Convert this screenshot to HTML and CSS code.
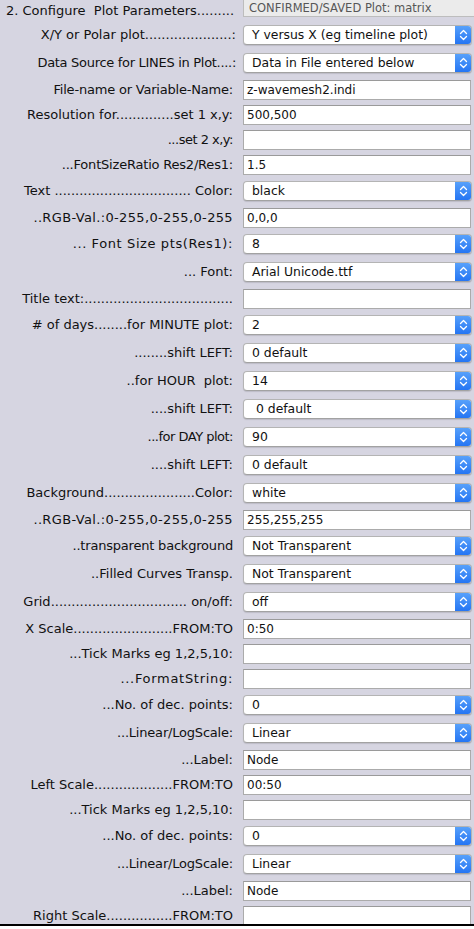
FILE: index.html
```html
<!DOCTYPE html>
<html>
<head>
<meta charset="utf-8">
<link rel="stylesheet" href="styles.css">
</head>
<body>
<div class="panel">
  <div class="row h">
    <div class="lbl head">2. Configure&nbsp; Plot Parameters.........</div>
    <div class="ctl"><div class="status">CONFIRMED/SAVED Plot: matrix</div></div>
  </div>

  <div class="row s"><div class="lbl flush">X/Y or Polar plot.....................:</div><div class="ctl"><div class="select"><span class="val">Y versus X (eg timeline plot)</span><span class="step"><svg width="17" height="20" viewBox="0 0 17 20"><polyline points="5.5,8.5 8.5,5.5 11.5,8.5"/><polyline points="5.5,11.5 8.5,14.5 11.5,11.5"/></svg></span></div></div></div>
  <div class="row s"><div class="lbl flush tight">Data Source for LINES in Plot....:</div><div class="ctl"><div class="select"><span class="val">Data in File entered below</span><span class="step"><svg width="17" height="20" viewBox="0 0 17 20"><polyline points="5.5,8.5 8.5,5.5 11.5,8.5"/><polyline points="5.5,11.5 8.5,14.5 11.5,11.5"/></svg></span></div></div></div>
  <div class="row i"><div class="lbl snug">File-name or Variable-Name:</div><div class="ctl"><div class="input">z-wavemesh2.indi</div></div></div>
  <div class="row i"><div class="lbl">Resolution for..............set 1 x,y:</div><div class="ctl"><div class="input">500,500</div></div></div>
  <div class="row i"><div class="lbl tighter">...set 2 x,y:</div><div class="ctl"><div class="input"></div></div></div>
  <div class="row i"><div class="lbl snug">...FontSizeRatio Res2/Res1:</div><div class="ctl"><div class="input">1.5</div></div></div>
  <div class="row s"><div class="lbl">Text ................................. Color:</div><div class="ctl"><div class="select"><span class="val">black</span><span class="step"><svg width="17" height="20" viewBox="0 0 17 20"><polyline points="5.5,8.5 8.5,5.5 11.5,8.5"/><polyline points="5.5,11.5 8.5,14.5 11.5,11.5"/></svg></span></div></div></div>
  <div class="row i"><div class="lbl wide">..RGB-Val.:0-255,0-255,0-255</div><div class="ctl"><div class="input">0,0,0</div></div></div>
  <div class="row s"><div class="lbl wider">... Font Size pts(Res1):</div><div class="ctl"><div class="select"><span class="val">8</span><span class="step"><svg width="17" height="20" viewBox="0 0 17 20"><polyline points="5.5,8.5 8.5,5.5 11.5,8.5"/><polyline points="5.5,11.5 8.5,14.5 11.5,11.5"/></svg></span></div></div></div>
  <div class="row s"><div class="lbl">... Font:</div><div class="ctl"><div class="select"><span class="val">Arial Unicode.ttf</span><span class="step"><svg width="17" height="20" viewBox="0 0 17 20"><polyline points="5.5,8.5 8.5,5.5 11.5,8.5"/><polyline points="5.5,11.5 8.5,14.5 11.5,11.5"/></svg></span></div></div></div>
  <div class="row i"><div class="lbl">Title text:....................................</div><div class="ctl"><div class="input"></div></div></div>
  <div class="row s"><div class="lbl"># of days........for MINUTE plot:</div><div class="ctl"><div class="select"><span class="val">2</span><span class="step"><svg width="17" height="20" viewBox="0 0 17 20"><polyline points="5.5,8.5 8.5,5.5 11.5,8.5"/><polyline points="5.5,11.5 8.5,14.5 11.5,11.5"/></svg></span></div></div></div>
  <div class="row s"><div class="lbl">........shift LEFT:</div><div class="ctl"><div class="select"><span class="val">0 default</span><span class="step"><svg width="17" height="20" viewBox="0 0 17 20"><polyline points="5.5,8.5 8.5,5.5 11.5,8.5"/><polyline points="5.5,11.5 8.5,14.5 11.5,11.5"/></svg></span></div></div></div>
  <div class="row s"><div class="lbl">..for HOUR&nbsp; plot:</div><div class="ctl"><div class="select"><span class="val">14</span><span class="step"><svg width="17" height="20" viewBox="0 0 17 20"><polyline points="5.5,8.5 8.5,5.5 11.5,8.5"/><polyline points="5.5,11.5 8.5,14.5 11.5,11.5"/></svg></span></div></div></div>
  <div class="row s"><div class="lbl">....shift LEFT:</div><div class="ctl"><div class="select"><span class="val">&nbsp;0 default</span><span class="step"><svg width="17" height="20" viewBox="0 0 17 20"><polyline points="5.5,8.5 8.5,5.5 11.5,8.5"/><polyline points="5.5,11.5 8.5,14.5 11.5,11.5"/></svg></span></div></div></div>
  <div class="row s"><div class="lbl tighter">...for DAY plot:</div><div class="ctl"><div class="select"><span class="val">90</span><span class="step"><svg width="17" height="20" viewBox="0 0 17 20"><polyline points="5.5,8.5 8.5,5.5 11.5,8.5"/><polyline points="5.5,11.5 8.5,14.5 11.5,11.5"/></svg></span></div></div></div>
  <div class="row s"><div class="lbl">....shift LEFT:</div><div class="ctl"><div class="select"><span class="val">0 default</span><span class="step"><svg width="17" height="20" viewBox="0 0 17 20"><polyline points="5.5,8.5 8.5,5.5 11.5,8.5"/><polyline points="5.5,11.5 8.5,14.5 11.5,11.5"/></svg></span></div></div></div>
  <div class="row s"><div class="lbl">Background......................Color:</div><div class="ctl"><div class="select"><span class="val">white</span><span class="step"><svg width="17" height="20" viewBox="0 0 17 20"><polyline points="5.5,8.5 8.5,5.5 11.5,8.5"/><polyline points="5.5,11.5 8.5,14.5 11.5,11.5"/></svg></span></div></div></div>
  <div class="row i"><div class="lbl wide">..RGB-Val.:0-255,0-255,0-255</div><div class="ctl"><div class="input">255,255,255</div></div></div>
  <div class="row s"><div class="lbl snug">..transparent background</div><div class="ctl"><div class="select"><span class="val">Not Transparent</span><span class="step"><svg width="17" height="20" viewBox="0 0 17 20"><polyline points="5.5,8.5 8.5,5.5 11.5,8.5"/><polyline points="5.5,11.5 8.5,14.5 11.5,11.5"/></svg></span></div></div></div>
  <div class="row s"><div class="lbl">..Filled Curves Transp.</div><div class="ctl"><div class="select"><span class="val">Not Transparent</span><span class="step"><svg width="17" height="20" viewBox="0 0 17 20"><polyline points="5.5,8.5 8.5,5.5 11.5,8.5"/><polyline points="5.5,11.5 8.5,14.5 11.5,11.5"/></svg></span></div></div></div>
  <div class="row s"><div class="lbl">Grid................................. on/off:</div><div class="ctl"><div class="select"><span class="val">off</span><span class="step"><svg width="17" height="20" viewBox="0 0 17 20"><polyline points="5.5,8.5 8.5,5.5 11.5,8.5"/><polyline points="5.5,11.5 8.5,14.5 11.5,11.5"/></svg></span></div></div></div>
  <div class="row i"><div class="lbl">X Scale........................FROM:TO</div><div class="ctl"><div class="input">0:50</div></div></div>
  <div class="row i"><div class="lbl">...Tick Marks eg 1,2,5,10:</div><div class="ctl"><div class="input"></div></div></div>
  <div class="row i"><div class="lbl loose">...FormatString:</div><div class="ctl"><div class="input"></div></div></div>
  <div class="row s"><div class="lbl">...No. of dec. points:</div><div class="ctl"><div class="select"><span class="val">0</span><span class="step"><svg width="17" height="20" viewBox="0 0 17 20"><polyline points="5.5,8.5 8.5,5.5 11.5,8.5"/><polyline points="5.5,11.5 8.5,14.5 11.5,11.5"/></svg></span></div></div></div>
  <div class="row s"><div class="lbl snug">...Linear/LogScale:</div><div class="ctl"><div class="select"><span class="val">Linear</span><span class="step"><svg width="17" height="20" viewBox="0 0 17 20"><polyline points="5.5,8.5 8.5,5.5 11.5,8.5"/><polyline points="5.5,11.5 8.5,14.5 11.5,11.5"/></svg></span></div></div></div>
  <div class="row i"><div class="lbl">...Label:</div><div class="ctl"><div class="input">Node</div></div></div>
  <div class="row i"><div class="lbl">Left Scale...................FROM:TO</div><div class="ctl"><div class="input">00:50</div></div></div>
  <div class="row i"><div class="lbl">...Tick Marks eg 1,2,5,10:</div><div class="ctl"><div class="input"></div></div></div>
  <div class="row s"><div class="lbl">...No. of dec. points:</div><div class="ctl"><div class="select"><span class="val">0</span><span class="step"><svg width="17" height="20" viewBox="0 0 17 20"><polyline points="5.5,8.5 8.5,5.5 11.5,8.5"/><polyline points="5.5,11.5 8.5,14.5 11.5,11.5"/></svg></span></div></div></div>
  <div class="row s"><div class="lbl snug">...Linear/LogScale:</div><div class="ctl"><div class="select"><span class="val">Linear</span><span class="step"><svg width="17" height="20" viewBox="0 0 17 20"><polyline points="5.5,8.5 8.5,5.5 11.5,8.5"/><polyline points="5.5,11.5 8.5,14.5 11.5,11.5"/></svg></span></div></div></div>
  <div class="row i"><div class="lbl">...Label:</div><div class="ctl"><div class="input">Node</div></div></div>
  <div class="row i"><div class="lbl">Right Scale................FROM:TO</div><div class="ctl"><div class="input"></div></div></div>
</div>
<div class="footer"></div>
</body>
</html>
```

FILE: styles.css
```css
html, body {
  margin: 0;
  padding: 0;
  background: #ffffff;
}

body {
  font-family: "DejaVu Sans", "Liberation Sans", sans-serif;
  font-size: 12.4px;
  color: #111;
}

.panel {
  background: #d6d5e1;
  height: 924px;
  overflow: hidden;
}

.footer {
  border-top: 2px solid #000;
  height: 6px;
  background: #ffffff;
}

.row {
  display: grid;
  grid-template-columns: 236px 228px;
  column-gap: 7px;
  align-items: start;
}

.row.h { height: 21px; }
.row.s { height: 28px; }
.row.i { height: 25px; }

.row.s .ctl { padding-top: 4px; }
.row.i .ctl { padding-top: 3px; }

.lbl {
  font-size: 13px;
  text-align: right;
  white-space: nowrap;
  overflow: hidden;
  padding-right: 3px;
}

.lbl.flush { padding-right: 0; }
.lbl.wide { letter-spacing: 0.35px; }
.lbl.wider { letter-spacing: 0.6px; }
.lbl.loose { letter-spacing: 0.7px; }
.lbl.snug { letter-spacing: -0.2px; }
.lbl.tight { letter-spacing: -0.3px; }
.lbl.tighter { letter-spacing: -0.5px; }

.row.h .lbl { line-height: 21px; }
.row.s .lbl { line-height: 28px; }
.row.i .lbl { line-height: 26px; }

.lbl.head {
  text-align: left;
  padding-left: 6px;
  padding-right: 0;
  line-height: 20px;
}

.status {
  box-sizing: border-box;
  height: 18px;
  width: 240px;
  margin-top: -1px;
  background: #ebebeb;
  border: 1px solid #bdbdbd;
  color: #575757;
  font-size: 11.5px;
  padding-left: 5px;
  line-height: 16px;
  white-space: nowrap;
  overflow: hidden;
}

.select {
  box-sizing: border-box;
  height: 20px;
  width: 229px;
  background: #ffffff;
  border: 1px solid #b4b4b4;
  border-bottom-color: #a2a2a2;
  border-radius: 4px;
  box-shadow: 0 1px 1px rgba(0, 0, 0, 0.12);
  display: flex;
  align-items: center;
  overflow: hidden;
}

.select .val {
  flex: 1;
  padding-left: 8px;
  white-space: nowrap;
  line-height: 18px;
}

.step {
  width: 17px;
  height: 20px;
  margin: -1px -1px -1px 0;
  background: linear-gradient(#5aa3fb, #2273f3);
  border-radius: 0 4px 4px 0;
  display: flex;
}

.step svg polyline {
  fill: none;
  stroke: #ffffff;
  stroke-width: 1.3;
  stroke-linecap: round;
  stroke-linejoin: round;
}

.input {
  box-sizing: border-box;
  height: 20px;
  width: 228px;
  background: #ffffff;
  border: 1px solid #ababab;
  border-top-color: #9a9a9a;
  padding-left: 3px;
  font-size: 12px;
  line-height: 18px;
  white-space: nowrap;
  overflow: hidden;
}
```
